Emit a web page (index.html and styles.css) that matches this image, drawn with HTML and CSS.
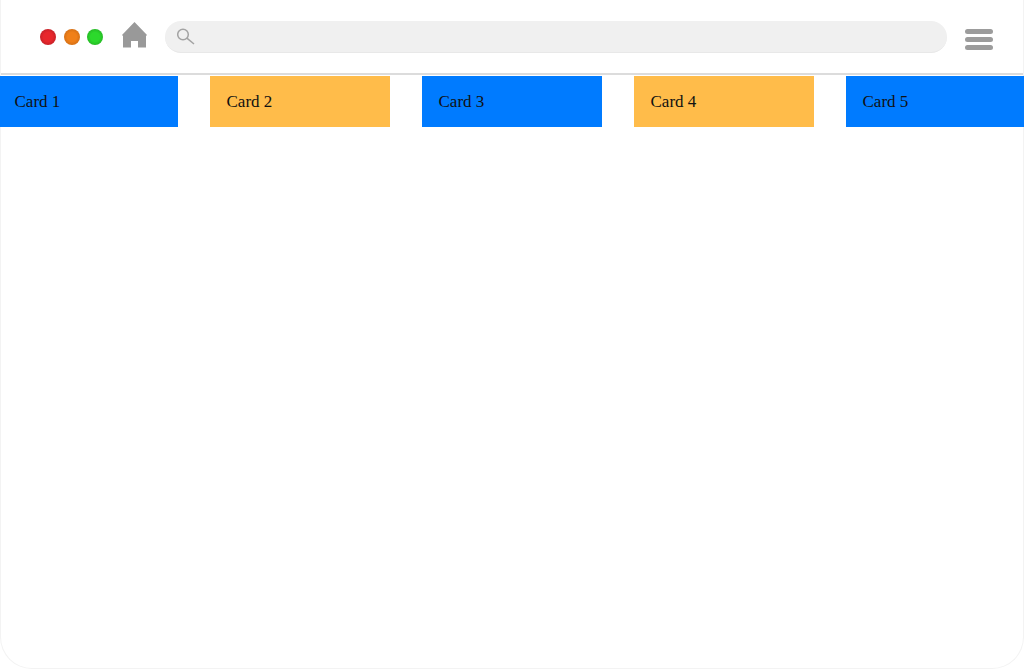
FILE: index.html
```html
<!DOCTYPE html>
<html lang="en">
<head>
<meta charset="utf-8">
<title>Cards</title>
<link rel="stylesheet" href="styles.css">
</head>
<body>
<div class="window">
  <header class="toolbar">
    <div class="lights">
      <span class="light red"></span>
      <span class="light orange"></span>
      <span class="light green"></span>
    </div>
    <svg class="home" viewBox="0 0 26 26" aria-hidden="true"><path d="M12.5 0 L25 13 L25 13.6 L24 13.6 L24 25.5 L16 25.5 L16 19 L9 19 L9 25.5 L1 25.5 L1 13.6 L0 13.6 L0 13 Z"/></svg>
    <div class="search">
      <svg class="lens" viewBox="0 0 18 18" aria-hidden="true"><circle cx="6" cy="6.5" r="5.3"/><path d="M9.9 10.2 L17 16"/></svg>
    </div>
    <div class="menu"><span></span><span></span><span></span></div>
  </header>
  <main class="cards">
    <div class="card blue">Card 1</div>
    <div class="card amber">Card 2</div>
    <div class="card blue">Card 3</div>
    <div class="card amber">Card 4</div>
    <div class="card blue">Card 5</div>
  </main>
</div>
</body>
</html>
```
FILE: styles.css
```css
html, body {
  margin: 0;
  height: 100%;
  background: #fff;
  overflow: hidden;
}
.window {
  position: relative;
  height: 669px;
  overflow: hidden;
}
.window::after {
  content: "";
  position: absolute;
  inset: 0;
  border: 1px solid #f3f3f3;
  border-top: 0;
  border-radius: 0 0 32px 32px;
  pointer-events: none;
}
.toolbar {
  box-sizing: border-box;
  height: 75px;
  border-bottom: 2px solid #dcdcdc;
  display: flex;
  align-items: center;
  padding: 1px 31px 0 40px;
}
.lights {
  display: flex;
  gap: 7.5px;
  margin-right: 19px;
}
.light {
  width: 16px;
  height: 16px;
  border-radius: 50%;
}
.red { background: radial-gradient(circle at 50% 50%, #e8272c 40%, #a81c24 100%); }
.orange { background: radial-gradient(circle at 50% 50%, #f08019 40%, #bd6212 100%); }
.green { background: radial-gradient(circle at 50% 50%, #2cd92c 40%, #1f9e1f 100%); }
.home {
  width: 26px;
  height: 26px;
  fill: #999;
  margin: 0 17px 4px 0;
  flex: none;
}
.search {
  flex: 1;
  height: 32px;
  box-sizing: border-box;
  background: #f0f0f0;
  border-bottom: 1px solid #e8e8e8;
  border-radius: 16px;
  display: flex;
  align-items: center;
  padding-left: 12px;
}
.lens {
  width: 18px;
  height: 18px;
  fill: none;
  stroke: #a3a3a3;
  stroke-width: 1.5;
}
.menu {
  width: 28px;
  margin: 4px 0 0 18px;
  display: flex;
  flex-direction: column;
  gap: 3px;
}
.menu span {
  height: 5px;
  border-radius: 3px;
  background: #9c9c9c;
}
.cards {
  position: relative;
  z-index: 1;
  display: flex;
  justify-content: center;
  gap: 32px;
  padding-top: 1px;
}
.card {
  flex: none;
  box-sizing: border-box;
  width: 180px;
  height: 51px;
  padding-left: 16.5px;
  display: flex;
  align-items: center;
  font: 17px "Liberation Serif", "Times New Roman", serif;
  color: #111;
}
.blue { background: #007bff; }
.amber { background: #ffbc4a; }
```
